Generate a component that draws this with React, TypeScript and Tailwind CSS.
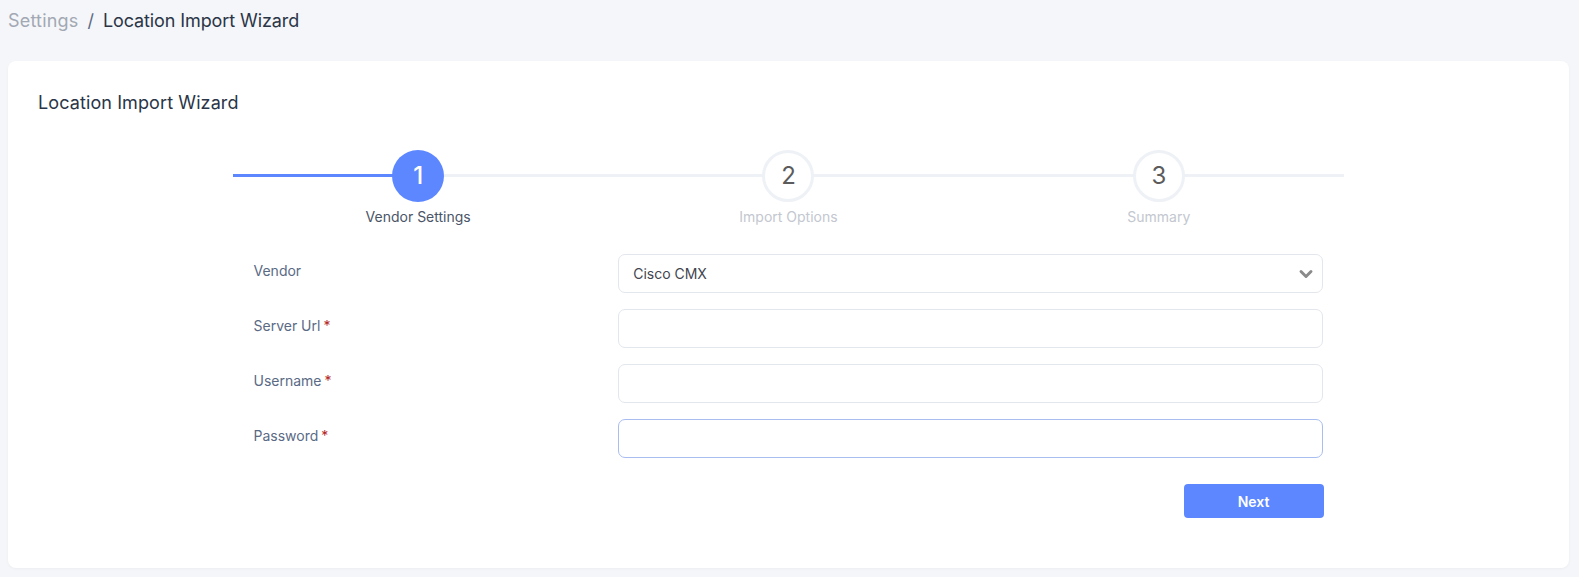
import { ChevronDown } from "lucide-react";

const steps = [
  { n: 1, label: "Vendor Settings" },
  { n: 2, label: "Import Options" },
  { n: 3, label: "Summary" },
];

const fields = [
  { label: "Server Url", type: "text" },
  { label: "Username", type: "text" },
  { label: "Password", type: "password" },
];

export default function App() {
  return (
    <div
      className="min-h-[577px] bg-[#f5f6f9] px-[8px] pt-[8px] pb-[9px] text-[#2a3547]"
      style={{ fontFamily: "Inter, 'Noto Sans', sans-serif" }}
    >
      {/* Breadcrumb */}
      <div className="flex items-center gap-[9px] h-[24px] text-[18px] tracking-[-0.1px]">
        <span className="text-[#a2a8b3] tracking-[0.2px]">Settings</span>
        <span className="text-[#5a6a85]">/</span>
        <span className="text-[#2a3547]">Location Import Wizard</span>
      </div>

      {/* Card */}
      <div className="mt-[29px] bg-white rounded-[8px] shadow-[0_1px_3px_rgba(0,0,0,0.04)] px-[30px] pt-[30px] pb-[50px] w-[1561px]">
        <p className="text-[18px] leading-[24px] tracking-[0.1px] text-[#2a3547]">Location Import Wizard</p>

        {/* Stepper */}
        <div className="mt-[35px] mx-auto w-[1111px] relative">
          <div className="absolute left-0 right-0 top-[24px] h-[3px] bg-[#eef1f5]" />
          <div className="absolute left-0 w-[185px] top-[24px] h-[3px] bg-[#5d87ff]" />
          <div className="relative grid grid-cols-3">
            {steps.map((s) => (
              <div key={s.n} className="flex flex-col items-center">
                {s.n === 1 ? (
                  <div className="w-[52px] h-[52px] rounded-full bg-[#5d87ff] text-white flex items-center justify-center text-[24px] font-medium">
                    {s.n}
                  </div>
                ) : (
                  <div className="w-[52px] h-[52px] rounded-full bg-white border-[3px] border-[#eef1f5] text-[#5b5b5b] flex items-center justify-center text-[24px]">
                    {s.n}
                  </div>
                )}
                <span
                  className={
                    "mt-[5px] text-[14px] leading-[20px] " +
                    (s.n === 1 ? "text-[#4a5568]" : "text-[#c3c7cf]")
                  }
                >
                  {s.label}
                </span>
              </div>
            ))}
          </div>
        </div>

        {/* Form */}
        <div className="mx-auto w-[1094px] mt-[27px]">
          <div className="flex flex-col gap-[16px]">
            <div className="flex">
              <div className="w-1/3 px-[12px] pt-[7px] text-[14px] leading-[20px] text-[#5a6a85]">Vendor</div>
              <div className="w-2/3 px-[12px]">
                <div className="h-[39px] rounded-[7px] border border-[#e3e6ec] flex items-center justify-between pl-[14px] pr-[6px] text-[14px] text-[#3f4650]">
                  <span>Cisco CMX</span>
                  <ChevronDown className="w-[20px] h-[20px] text-[#8a8a8a]" strokeWidth={3.5} />
                </div>
              </div>
            </div>
            {fields.map((f, i) => (
              <div key={f.label} className="flex">
                <div className="w-1/3 px-[12px] pt-[7px] text-[14px] leading-[20px] text-[#5a6a85]">
                  {f.label}
                  <span className="text-[#b3261e] ml-[3px]">*</span>
                </div>
                <div className="w-2/3 px-[12px]">
                  <input
                    type={f.type}
                    className={
                      "w-full h-[39px] rounded-[7px] border outline-none px-[14px] text-[14px] " +
                      (i === 2 ? "border-[#a9bdf0]" : "border-[#e3e6ec]")
                    }
                  />
                </div>
              </div>
            ))}
          </div>

          <div className="flex justify-end px-[12px] mt-[26px]">
            <button className="w-[140px] h-[34px] rounded-[4px] bg-[#5d87ff] text-white text-[14px] font-semibold">
              Next
            </button>
          </div>
        </div>
      </div>
    </div>
  );
}
